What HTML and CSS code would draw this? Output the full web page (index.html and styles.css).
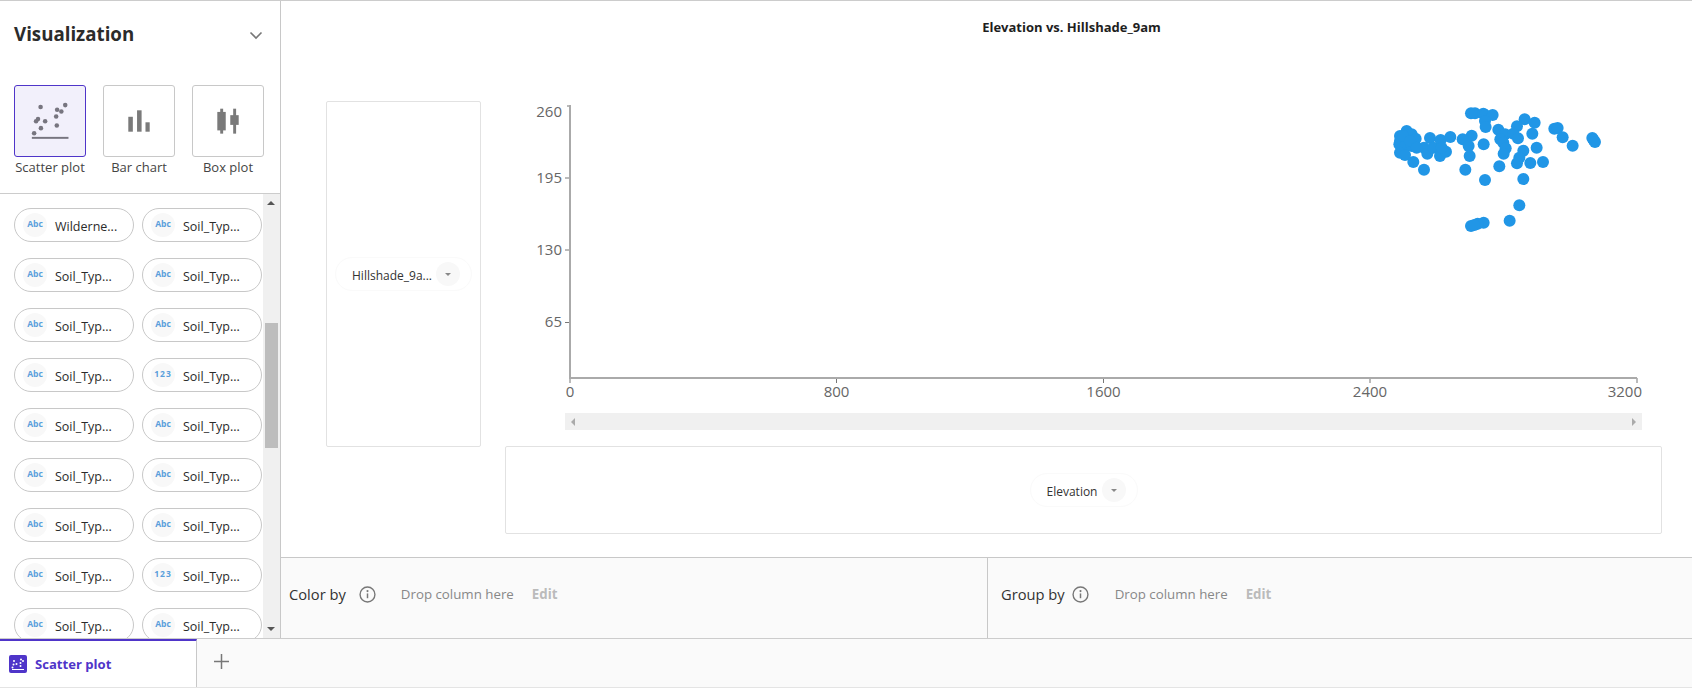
FILE: index.html
```html
<!DOCTYPE html>
<html lang="en">
<head>
<meta charset="utf-8">
<title>Scatter plot</title>
<link rel="stylesheet" href="styles.css">
</head>
<body>
<div class="workspace">
  <aside class="sidebar">
    <div class="viz-head">
      <h2 class="viz-title">Visualization</h2>
      <svg class="chevron" width="14" height="9" viewBox="0 0 14 9"><path d="M1.5 1.5 7 7l5.5-5.5" fill="none" stroke="#777" stroke-width="1.6"/></svg>
    </div>
    <div class="tiles">
      <div class="tile-wrap">
        <div class="tile tile-active">
          <svg class="tile-icon" viewBox="12 15 216 216">
            <g fill="#77757f"><circle cx="91" cy="80" r="7"/><circle cx="142" cy="88" r="7"/><circle cx="155" cy="94" r="7"/><circle cx="167" cy="74" r="7"/><circle cx="139" cy="109" r="7"/><circle cx="141" cy="137" r="7"/><circle cx="105" cy="124" r="7"/><circle cx="83" cy="117" r="7"/><circle cx="77" cy="124" r="7"/><circle cx="92" cy="145" r="7"/><circle cx="71" cy="161" r="7"/><rect x="64" y="172" width="113" height="6"/></g>
          </svg>
        </div>
        <span class="tile-label">Scatter plot</span>
      </div>
      <div class="tile-wrap">
        <div class="tile">
          <svg class="tile-icon" viewBox="0 0 216 216"><g fill="#7a7a7a"><rect x="75" y="95" width="14" height="46"/><rect x="102" y="75" width="14" height="66"/><rect x="128" y="112" width="13" height="29"/></g></svg>
        </div>
        <span class="tile-label">Bar chart</span>
      </div>
      <div class="tile-wrap">
        <div class="tile">
          <svg class="tile-icon" viewBox="0 0 216 216"><g fill="#7a7a7a"><rect x="75" y="80" width="26" height="57"/><rect x="84" y="70" width="9" height="77"/><rect x="115" y="90" width="26" height="30"/><rect x="124" y="70" width="9" height="77"/></g></svg>
        </div>
        <span class="tile-label">Box plot</span>
      </div>
    </div>
    <div class="columns">
      <div class="column-list">
        <div class="pill"><span class="type">Abc</span><span class="pill-name">Wilderne...</span></div>
        <div class="pill"><span class="type">Abc</span><span class="pill-name">Soil_Typ...</span></div>
        <div class="pill"><span class="type">Abc</span><span class="pill-name">Soil_Typ...</span></div>
        <div class="pill"><span class="type">Abc</span><span class="pill-name">Soil_Typ...</span></div>
        <div class="pill"><span class="type">Abc</span><span class="pill-name">Soil_Typ...</span></div>
        <div class="pill"><span class="type">Abc</span><span class="pill-name">Soil_Typ...</span></div>
        <div class="pill"><span class="type">Abc</span><span class="pill-name">Soil_Typ...</span></div>
        <div class="pill"><span class="type num">123</span><span class="pill-name">Soil_Typ...</span></div>
        <div class="pill"><span class="type">Abc</span><span class="pill-name">Soil_Typ...</span></div>
        <div class="pill"><span class="type">Abc</span><span class="pill-name">Soil_Typ...</span></div>
        <div class="pill"><span class="type">Abc</span><span class="pill-name">Soil_Typ...</span></div>
        <div class="pill"><span class="type">Abc</span><span class="pill-name">Soil_Typ...</span></div>
        <div class="pill"><span class="type">Abc</span><span class="pill-name">Soil_Typ...</span></div>
        <div class="pill"><span class="type">Abc</span><span class="pill-name">Soil_Typ...</span></div>
        <div class="pill"><span class="type">Abc</span><span class="pill-name">Soil_Typ...</span></div>
        <div class="pill"><span class="type num">123</span><span class="pill-name">Soil_Typ...</span></div>
        <div class="pill"><span class="type">Abc</span><span class="pill-name">Soil_Typ...</span></div>
        <div class="pill"><span class="type">Abc</span><span class="pill-name">Soil_Typ...</span></div>
      </div>
      <div class="vscroll">
        <span class="arrow-up"></span>
        <span class="vthumb"></span>
        <span class="arrow-down"></span>
      </div>
    </div>
  </aside>
  <main class="main">
    <section class="chart-area">
      <h1 class="chart-title">Elevation vs. Hillshade_9am</h1>
      <div class="chart-row">
        <div class="y-box">
          <div class="axis-pill y-pill"><span class="axis-name">Hillshade_9a...</span><span class="caret-wrap"><span class="caret"></span></span></div>
        </div>
        <div class="chart-col">
          <svg class="plot" width="1157" height="311" viewBox="0 0 1157 311">
            <g class="axis">
              <path d="M62 4h3M60 76h5M60 148h5M60 220.500h5M65 276v5M331.500 276v5M598.500 276v5M865 276v5M1132 276v5" stroke-width="1"/>
              <path class="axis-line" d="M65 3v273h1067"/>
            </g>
            <g class="ticks">
              <text x="57" y="15" text-anchor="end">260</text>
              <text x="57" y="81" text-anchor="end">195</text>
              <text x="57" y="153" text-anchor="end">130</text>
              <text x="57" y="225" text-anchor="end">65</text>
              <text x="65" y="295" text-anchor="middle">0</text>
              <text x="331.500" y="295" text-anchor="middle">800</text>
              <text x="598.500" y="295" text-anchor="middle">1600</text>
              <text x="865" y="295" text-anchor="middle">2400</text>
              <text x="1137" y="295" text-anchor="end">3200</text>
            </g>
            <g class="dots" transform="translate(865 -11) scale(.3333)">
              <circle cx="303" cy="67" r="18"/><circle cx="315" cy="67" r="18"/><circle cx="340" cy="68" r="18"/><circle cx="345" cy="72" r="18"/><circle cx="368" cy="72" r="18"/><circle cx="345" cy="90" r="18"/><circle cx="347" cy="108" r="18"/>
              <circle cx="464" cy="85" r="18"/><circle cx="494" cy="95" r="18"/><circle cx="441" cy="106" r="18"/><circle cx="385" cy="116" r="18"/><circle cx="405" cy="130" r="18"/><circle cx="430" cy="128" r="18"/><circle cx="444" cy="142" r="18"/><circle cx="487" cy="128" r="18"/>
              <circle cx="553" cy="113" r="18"/><circle cx="563" cy="111" r="18"/><circle cx="578" cy="139" r="18"/><circle cx="608" cy="164" r="18"/><circle cx="667" cy="141" r="18"/><circle cx="671" cy="147" r="18"/><circle cx="675" cy="153" r="18"/>
              <circle cx="391" cy="145" r="18"/><circle cx="400" cy="155" r="18"/><circle cx="407" cy="172" r="18"/><circle cx="401" cy="188" r="18"/><circle cx="460" cy="179" r="18"/><circle cx="500" cy="170" r="18"/><circle cx="448" cy="200" r="18"/><circle cx="441" cy="217" r="18"/><circle cx="481" cy="216" r="18"/><circle cx="519" cy="213" r="18"/>
              <circle cx="460" cy="264" r="18"/><circle cx="388" cy="226" r="18"/><circle cx="345" cy="267" r="18"/><circle cx="286" cy="236" r="18"/><circle cx="448" cy="343" r="18"/><circle cx="419" cy="389" r="18"/><circle cx="341" cy="395" r="18"/><circle cx="323" cy="398" r="18"/><circle cx="303" cy="405" r="18"/><circle cx="313" cy="402" r="18"/>
              <circle cx="305" cy="134" r="18"/><circle cx="278" cy="145" r="18"/><circle cx="296" cy="165" r="18"/><circle cx="299" cy="195" r="18"/><circle cx="341" cy="160" r="18"/>
              <circle cx="110" cy="120" r="18"/><circle cx="90" cy="135" r="18"/><circle cx="125" cy="130" r="18"/><circle cx="137" cy="143" r="18"/><circle cx="90" cy="150" r="18"/><circle cx="110" cy="150" r="18"/><circle cx="88" cy="160" r="18"/><circle cx="105" cy="165" r="18"/><circle cx="125" cy="165" r="18"/><circle cx="90" cy="185" r="18"/><circle cx="105" cy="192" r="18"/><circle cx="130" cy="213" r="18"/><circle cx="162" cy="236" r="18"/><circle cx="180" cy="141" r="18"/><circle cx="162" cy="170" r="18"/><circle cx="172" cy="188" r="18"/><circle cx="190" cy="170" r="18"/><circle cx="212" cy="147" r="18"/><circle cx="210" cy="195" r="18"/><circle cx="228" cy="182" r="18"/><circle cx="241" cy="138" r="18"/><circle cx="215" cy="170" r="18"/><circle cx="100" cy="135" r="18"/><circle cx="120" cy="150" r="18"/><circle cx="140" cy="170" r="18"/>
            </g>
          </svg>
          <div class="hscroll"><span class="arrow-left"></span><span class="arrow-right"></span></div>
          <div class="x-box">
            <div class="axis-pill x-pill"><span class="axis-name">Elevation</span><span class="caret-wrap"><span class="caret"></span></span></div>
          </div>
        </div>
      </div>
    </section>
    <section class="encodings">
      <div class="encoding">
        <span class="enc-label">Color by</span>
        <svg class="info" width="17" height="17" viewBox="0 0 16 16"><circle cx="8" cy="8" r="7" fill="none" stroke="#777" stroke-width="1.300"/><path d="M8 7v4.500" stroke="#777" stroke-width="1.400"/><circle cx="8" cy="4.800" r="1" fill="#777"/></svg>
        <span class="enc-drop">Drop column here</span>
        <span class="enc-edit">Edit</span>
      </div>
      <div class="encoding encoding-group">
        <span class="enc-label">Group by</span>
        <svg class="info" width="17" height="17" viewBox="0 0 16 16"><circle cx="8" cy="8" r="7" fill="none" stroke="#777" stroke-width="1.300"/><path d="M8 7v4.500" stroke="#777" stroke-width="1.400"/><circle cx="8" cy="4.800" r="1" fill="#777"/></svg>
        <span class="enc-drop">Drop column here</span>
        <span class="enc-edit">Edit</span>
      </div>
    </section>
  </main>
</div>
<footer class="tabbar">
  <div class="tab">
    <svg class="tab-icon" width="18" height="18" viewBox="0 0 18 18">
      <rect width="18" height="18" rx="2" fill="#4f35c9"/>
      <g fill="#fff"><circle cx="5" cy="6" r="1"/><circle cx="12" cy="4.500" r="1"/><circle cx="14" cy="6" r="1"/><circle cx="11.500" cy="8" r="1"/><circle cx="4.500" cy="9.500" r="1"/><circle cx="7.500" cy="9" r="1"/><circle cx="11.500" cy="11" r="1"/><circle cx="3.500" cy="12.500" r="1"/><rect x="3" y="14" width="12" height="1"/></g>
    </svg>
    <span class="tab-label">Scatter plot</span>
  </div>
  <div class="tab-add">
    <svg width="15" height="15" viewBox="0 0 15 15"><path d="M7.500 0v15M0 7.500h15" stroke="#777" stroke-width="1.500"/></svg>
  </div>
</footer>
</body>
</html>
```
FILE: styles.css
```css
* { box-sizing: border-box; }
html, body { margin: 0; height: 100%; }
body {
  width: 1692px;
  height: 688px;
  overflow: hidden;
  display: flex;
  flex-direction: column;
  background: #fff;
  font-family: "Open Sans", "Noto Sans", sans-serif;
  color: #252525;
}
.workspace {
  flex: 0 0 638px;
  display: flex;
  border-top: 1px solid #ccc;
  min-height: 0;
}
.sidebar {
  flex: 0 0 281px;
  border-right: 1px solid #c8c8c8;
  display: flex;
  flex-direction: column;
  min-height: 0;
}
.viz-head {
  height: 84px;
  display: flex;
  justify-content: space-between;
  align-items: flex-start;
  padding: 20px 17px 0 14px;
}
.viz-title {
  margin: 0;
  font-size: 18.700px;
  line-height: 26px;
  font-weight: 700;
  color: #2b2b2b;
}
.chevron { margin-top: 10px; }
.tiles {
  display: flex;
  gap: 17px;
  padding-left: 14px;
  height: 108px;
}
.tile-wrap { width: 72px; display: flex; flex-direction: column; align-items: center; }
.tile {
  width: 72px;
  height: 72px;
  border: 1px solid #c8c8c8;
  border-radius: 3px;
  background: #fff;
}
.tile-active { background: #f2f0fb; border-color: #4f35c9; }
.tile-icon { display: block; width: 70px; height: 70px; }
.tile-label { font-size: 13px; line-height: 18px; margin-top: 1px; color: #444; white-space: nowrap; }
.columns {
  flex: 1;
  min-height: 0;
  display: flex;
  border-top: 1px solid #ccc;
  overflow: hidden;
}
.column-list {
  flex: 0 0 263px;
  display: grid;
  grid-template-columns: 120px 120px;
  grid-auto-rows: 34px;
  column-gap: 8px;
  row-gap: 16px;
  align-content: start;
  padding: 14px 0 0 14px;
  overflow: hidden;
}
.pill {
  display: flex;
  align-items: center;
  height: 34px;
  border: 1px solid #c8c8c8;
  border-radius: 17px;
  padding-left: 8px;
  background: #fff;
}
.type {
  flex: 0 0 24px;
  height: 24px;
  border-radius: 50%;
  background: #f8f8f8;
  color: #5a9fdc;
  font-size: 8.500px;
  font-weight: 700;
  line-height: 22px;
  text-align: center;
}
.num { letter-spacing: 1px; }
.pill-name { margin-left: 8px; padding-top: 2px; font-size: 12.500px; color: #2b2b2b; white-space: nowrap; }
.vscroll {
  flex: 0 0 17px;
  background: #f0f0f0;
  position: relative;
}
.arrow-up, .arrow-down { width: 0; height: 0; border-left: 4px solid transparent; border-right: 4px solid transparent; position: absolute; left: 4px; }
.arrow-up { border-bottom: 4px solid #555; top: 7px; }
.arrow-down { border-top: 4px solid #555; bottom: 7px; }
.vthumb { position: absolute; top: 129px; left: 2px; width: 13px; height: 125px; background: #bdbdbd; }
.main { flex: 1; min-width: 0; display: flex; flex-direction: column; }
.chart-area { flex: 1; min-height: 0; }
.chart-title {
  margin: 0;
  height: 100px;
  padding: 18px 0 0 170px;
  text-align: center;
  font-size: 13px;
  line-height: 17px;
  font-weight: 700;
  color: #1e1e1e;
}
.chart-row { display: flex; align-items: flex-start; padding-left: 45px; }
.y-box {
  width: 155px;
  height: 346px;
  border: 1px solid #e2e2e2;
  border-radius: 2px;
  display: flex;
  align-items: center;
  justify-content: center;
  margin-right: 24px;
}
.chart-col { width: 1157px; padding-top: 1px; }
.plot { display: block; }
.axis path { stroke: #777; fill: none; }
.axis .axis-line { stroke: #aaa; stroke-width: 2; }
.ticks text { font-size: 15px; fill: #666; font-family: "Open Sans", sans-serif; }
.dots circle { fill: #2196e6; }
.hscroll {
  margin-left: 60px;
  width: 1077px;
  height: 17px;
  background: #f0f0f0;
  display: flex;
  justify-content: space-between;
  align-items: center;
  padding: 0 6px;
}
.arrow-left { width: 0; height: 0; border-top: 4px solid transparent; border-bottom: 4px solid transparent; border-right: 4px solid #aaa; }
.arrow-right { width: 0; height: 0; border-top: 4px solid transparent; border-bottom: 4px solid transparent; border-left: 4px solid #aaa; }
.x-box {
  margin-top: 16px;
  height: 88px;
  border: 1px solid #e2e2e2;
  border-radius: 2px;
  display: flex;
  align-items: center;
  justify-content: center;
}
.axis-pill {
  display: flex;
  align-items: center;
  height: 34px;
  border: 1px solid #fafafa;
  border-radius: 17px;
  background: #fff;
}
.y-pill { width: 137px; padding-left: 16px; }
.x-pill { width: 108px; padding-left: 16px; }
.axis-name { font-size: 12px; padding-top: 2px; color: #333; white-space: nowrap; }
.caret-wrap {
  flex: 0 0 24px;
  height: 24px;
  margin-left: auto;
  margin-right: 11px;
  border-radius: 50%;
  background: #f8f8f8;
  display: flex;
  align-items: center;
  justify-content: center;
}
.caret { width: 0; height: 0; border-left: 3.500px solid transparent; border-right: 3.500px solid transparent; border-top: 3.500px solid #888; }
.encodings {
  flex: 0 0 81px;
  display: flex;
  border-top: 1px solid #c8c8c8;
  background: #fafafa;
}
.encoding {
  display: flex;
  align-items: center;
  height: 72px;
  padding-left: 8px;
  flex: 0 0 706px;
}
.encoding-group {
  flex: 1;
  height: auto;
  padding: 0 0 8px 13px;
  border-left: 1px solid #c8c8c8;
}
.enc-label { font-size: 14.700px; color: #333; }
.info { margin-left: 13px; }
.encoding-group .info { margin-left: 7px; }
.enc-drop { margin-left: 25px; font-size: 13.300px; color: #888; }
.encoding-group .enc-drop { margin-left: 26px; }
.enc-edit { margin-left: 18px; font-size: 13.300px; font-weight: 700; color: #bbb; }
.tabbar {
  flex: 0 0 50px;
  display: flex;
  border-top: 1px solid #ccc;
  border-bottom: 1px solid #e4e4e4;
  background: #fafafa;
}
.tab {
  flex: 0 0 197px;
  display: flex;
  align-items: center;
  padding-left: 9px;
  background: #fff;
  border-top: 2px solid #4f35c9;
  border-right: 1px solid #c8c8c8;
}
.tab-label { margin-left: 8px; font-size: 13.100px; font-weight: 700; color: #4f35c9; }
.tab-add { padding: 15px 0 0 17px; }
.tab-add svg { display: block; }
```
